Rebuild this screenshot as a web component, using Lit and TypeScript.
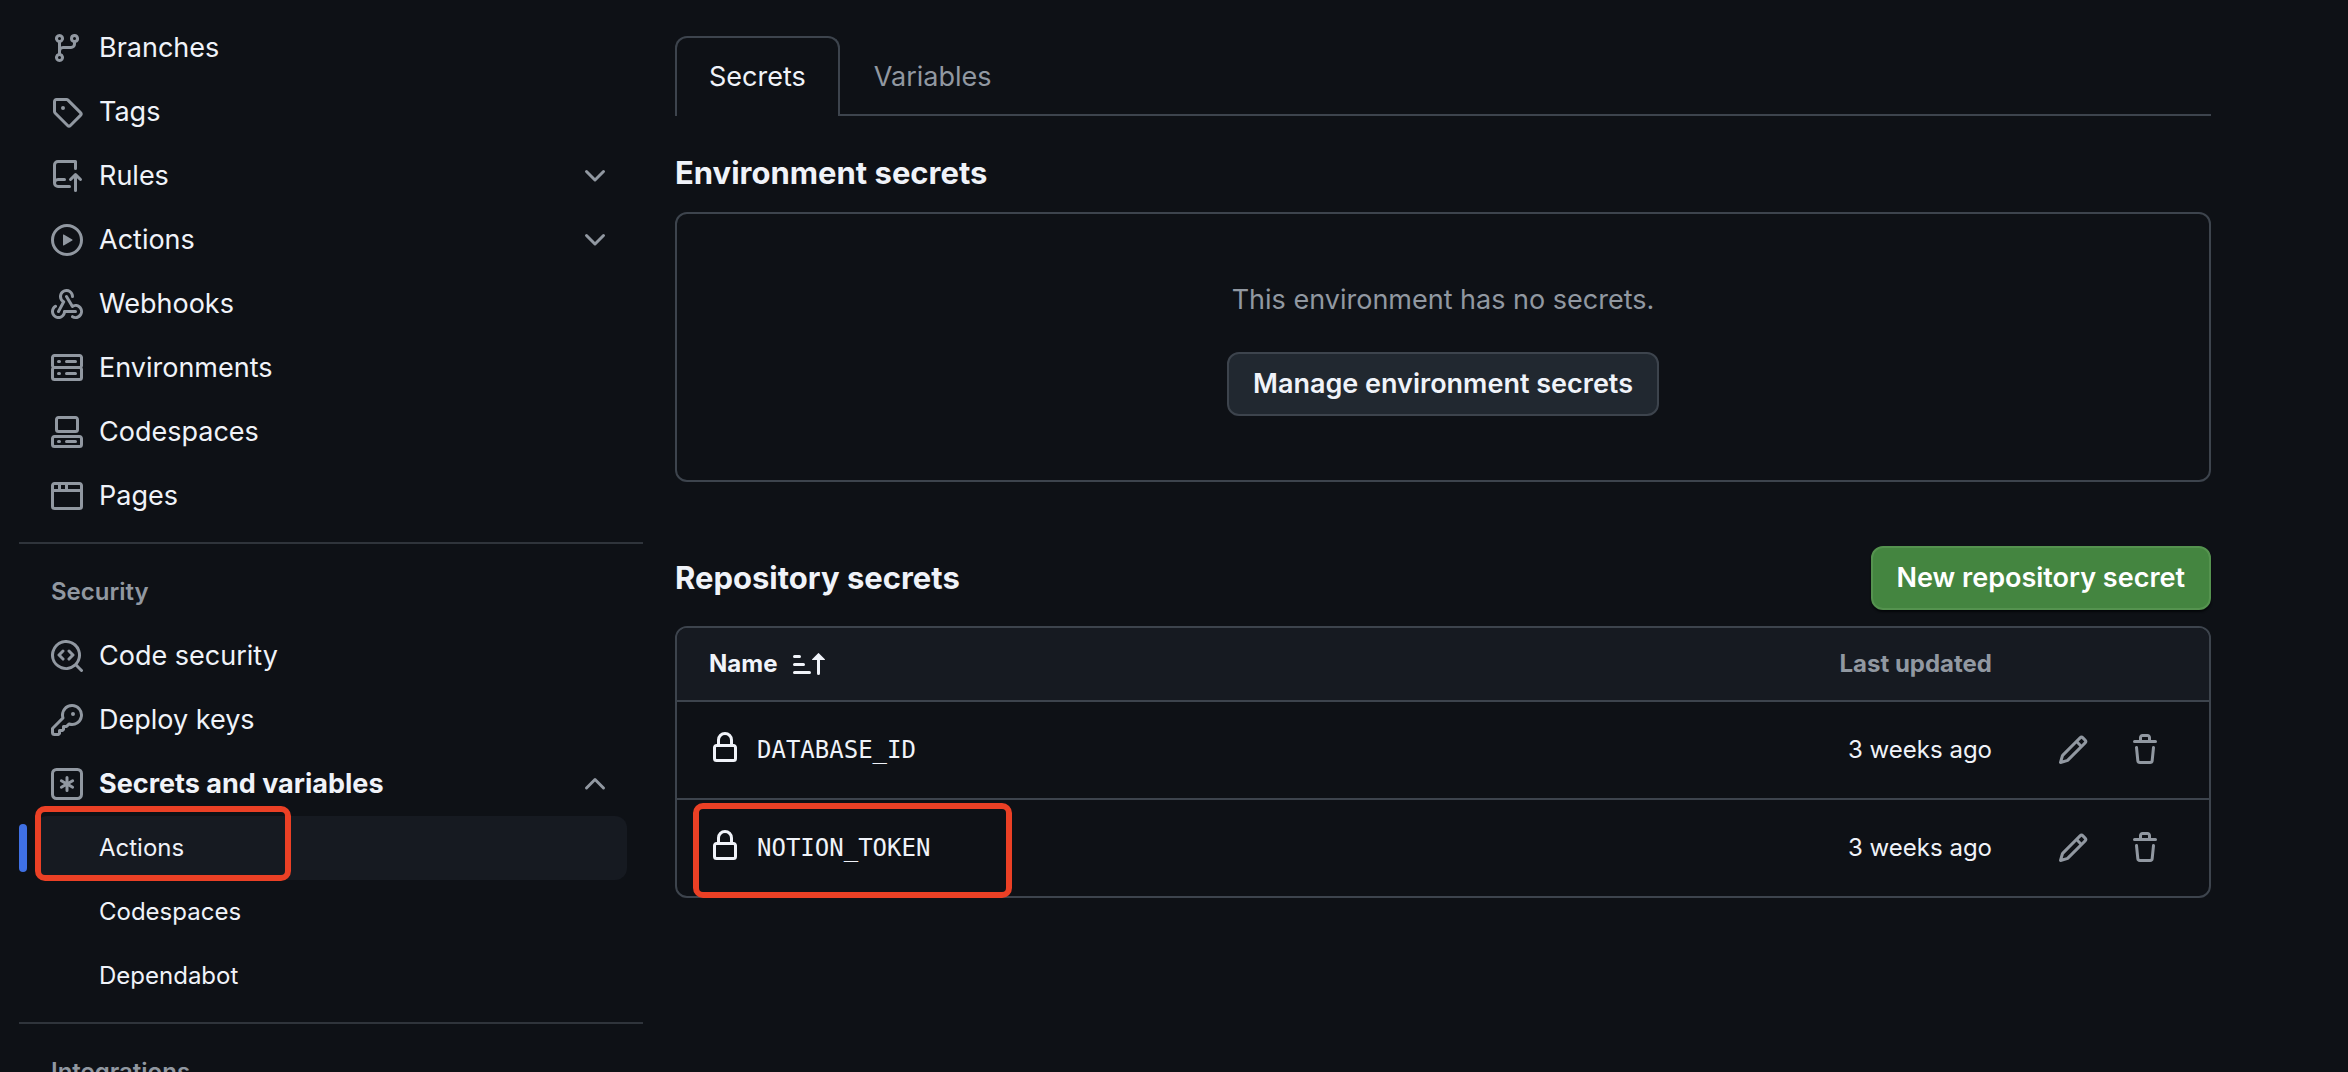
import { LitElement, html, css, svg, nothing } from "lit";
import { customElement, property } from "lit/decorators.js";
import { classMap } from "lit/directives/class-map.js";

const ICONS: Record<string, string> = {
  branch:
    "M9.5 3.25a2.25 2.25 0 1 1 3 2.122V6A2.5 2.5 0 0 1 10 8.5H6a1 1 0 0 0-1 1v1.128a2.251 2.251 0 1 1-1.5 0V5.372a2.25 2.25 0 1 1 1.5 0v1.836A2.493 2.493 0 0 1 6 7h4a1 1 0 0 0 1-1v-.628A2.25 2.25 0 0 1 9.5 3.25Zm-6 0a.75.75 0 1 0 1.5 0 .75.75 0 0 0-1.5 0Zm8.25-.75a.75.75 0 1 0 0 1.5.75.75 0 0 0 0-1.5ZM4.25 12a.75.75 0 1 0 0 1.5.75.75 0 0 0 0-1.5Z",
  tag:
    "M1 7.775V2.75C1 1.784 1.784 1 2.75 1h5.025c.464 0 .91.184 1.238.513l6.25 6.25a1.75 1.75 0 0 1 0 2.474l-5.026 5.026a1.75 1.75 0 0 1-2.474 0l-6.25-6.25A1.752 1.752 0 0 1 1 7.775Zm1.5 0c0 .066.026.13.073.177l6.25 6.25a.25.25 0 0 0 .354 0l5.025-5.025a.25.25 0 0 0 0-.354l-6.25-6.25a.25.25 0 0 0-.177-.073H2.75a.25.25 0 0 0-.25.25ZM6 5a1 1 0 1 1 0 2 1 1 0 0 1 0-2Z",
  repoPush:
    "M1 2.5A2.5 2.5 0 0 1 3.5 0h8.75a.75.75 0 0 1 .75.75v3.5a.75.75 0 0 1-1.5 0V1.5h-8a1 1 0 0 0-1 1v6.708A2.493 2.493 0 0 1 3.5 9h3.25a.75.75 0 0 1 0 1.5H3.5a1 1 0 0 0 0 2h5.75a.75.75 0 0 1 0 1.5H3.5A2.5 2.5 0 0 1 1 11.5Zm13.23 7.79h-.001l-1.224-1.224v6.184a.75.75 0 0 1-1.5 0V9.066L10.28 10.29a.75.75 0 0 1-1.06-1.061l2.505-2.504a.75.75 0 0 1 1.06 0L15.29 9.23a.751.751 0 0 1-.018 1.042.751.751 0 0 1-1.042.018Z",
  play:
    "M8 0a8 8 0 1 1 0 16A8 8 0 0 1 8 0ZM1.5 8a6.5 6.5 0 1 0 13 0 6.5 6.5 0 0 0-13 0Zm4.879-2.773 4.264 2.559a.25.25 0 0 1 0 .428l-4.264 2.559A.25.25 0 0 1 6 10.559V5.442a.25.25 0 0 1 .379-.215Z",
  webhook:
    "M5.5 4.25a2.25 2.25 0 0 1 4.5 0 .75.75 0 0 0 1.5 0 3.75 3.75 0 1 0-6.14 2.889l-2.272 4.258a.75.75 0 0 0 1.324.706L7 7.25a.75.75 0 0 0-.309-1.015A2.25 2.25 0 0 1 5.5 4.25ZM7.364 3.607a.75.75 0 0 1 1.03.257l2.608 4.349a3.75 3.75 0 1 1-.628 6.785.75.75 0 0 1 .752-1.299 2.25 2.25 0 1 0-.033-3.88.75.75 0 0 1-1.03-.256L7.107 4.636a.75.75 0 0 1 .257-1.03ZM2.9 8.776A.75.75 0 0 1 2.625 9.8 2.25 2.25 0 1 0 6 11.75a.75.75 0 0 1 .75-.751h5.5a.75.75 0 0 1 0 1.5H7.425a3.751 3.751 0 1 1-5.55-3.998.75.75 0 0 1 1.024.274Z",
  server:
    "M1.75 1h12.5c.966 0 1.75.784 1.75 1.75v4c0 .372-.116.717-.314 1 .198.283.314.628.314 1v4a1.75 1.75 0 0 1-1.75 1.75H1.75A1.75 1.75 0 0 1 0 12.75v-4c0-.358.109-.707.314-1a1.739 1.739 0 0 1-.314-1v-4C0 1.784.784 1 1.75 1ZM1.5 2.75v4c0 .138.112.25.25.25h12.5a.25.25 0 0 0 .25-.25v-4a.25.25 0 0 0-.25-.25H1.75a.25.25 0 0 0-.25.25Zm.25 5.75a.25.25 0 0 0-.25.25v4c0 .138.112.25.25.25h12.5a.25.25 0 0 0 .25-.25v-4a.25.25 0 0 0-.25-.25ZM7 4.75A.75.75 0 0 1 7.75 4h4.5a.75.75 0 0 1 0 1.5h-4.5A.75.75 0 0 1 7 4.75ZM7.75 10h4.5a.75.75 0 0 1 0 1.5h-4.5a.75.75 0 0 1 0-1.5ZM3 4.75A.75.75 0 0 1 3.75 4h.5a.75.75 0 0 1 0 1.5h-.5A.75.75 0 0 1 3 4.75ZM3.75 10h.5a.75.75 0 0 1 0 1.5h-.5a.75.75 0 0 1 0-1.5Z",
  codespaces:
    "M0 11.25c0-.966.784-1.75 1.75-1.75h12.5c.966 0 1.75.784 1.75 1.75v3A1.75 1.75 0 0 1 14.25 16H1.75A1.75 1.75 0 0 1 0 14.25Zm2-9.5C2 .784 2.784 0 3.75 0h8.5C13.216 0 14 .784 14 1.75v5a1.75 1.75 0 0 1-1.75 1.75h-8.5A1.75 1.75 0 0 1 2 6.75Zm1.75-.25a.25.25 0 0 0-.25.25v5c0 .138.112.25.25.25h8.5a.25.25 0 0 0 .25-.25v-5a.25.25 0 0 0-.25-.25Zm-2 9.5a.25.25 0 0 0-.25.25v3c0 .138.112.25.25.25h12.5a.25.25 0 0 0 .25-.25v-3a.25.25 0 0 0-.25-.25ZM7 12.75a.75.75 0 0 1 .75-.75h4.5a.75.75 0 0 1 0 1.5h-4.5a.75.75 0 0 1-.75-.75Zm-4 0a.75.75 0 0 1 .75-.75h.5a.75.75 0 0 1 0 1.5h-.5a.75.75 0 0 1-.75-.75Z",
  browser:
    "M0 2.75C0 1.784.784 1 1.75 1h12.5c.966 0 1.75.784 1.75 1.75v10.5A1.75 1.75 0 0 1 14.25 15H1.75A1.75 1.75 0 0 1 0 13.25ZM14.5 6h-13v7.25c0 .138.112.25.25.25h12.5a.25.25 0 0 0 .25-.25Zm-6-3.5v2h6V2.75a.25.25 0 0 0-.25-.25ZM5 2.5v2h2v-2Zm-3.25 0a.25.25 0 0 0-.25.25V4.5h2v-2Z",
  codescan:
    "M8.47 4.97a.75.75 0 0 0 0 1.06L9.94 7.5 8.47 8.97a.75.75 0 1 0 1.06 1.06l2-2a.75.75 0 0 0 0-1.06l-2-2a.75.75 0 0 0-1.06 0ZM6.53 6.03a.75.75 0 0 0-1.06-1.06l-2 2a.75.75 0 0 0 0 1.06l2 2a.75.75 0 1 0 1.06-1.06L5.06 7.5l1.47-1.47ZM12.246 13.307a7.501 7.501 0 1 1 1.06-1.06l2.474 2.473a.749.749 0 1 1-1.06 1.06ZM1.5 7.5a6.002 6.002 0 0 0 3.608 5.504 6.002 6.002 0 0 0 6.486-1.117.748.748 0 0 1 .292-.293A6 6 0 1 0 1.5 7.5Z",
  key:
    "M10.5 0a5.499 5.499 0 1 1-1.288 10.848l-.932.932a.749.749 0 0 1-.53.22H7v.75a.749.749 0 0 1-.22.53l-.5.5a.749.749 0 0 1-.53.22H5v.75a.749.749 0 0 1-.22.53l-.5.5a.749.749 0 0 1-.53.22h-2A1.75 1.75 0 0 1 0 14.25v-2c0-.199.079-.389.22-.53l4.932-4.932A5.5 5.5 0 0 1 10.5 0Zm-4 5.5c-.001.431.069.86.205 1.269a.75.75 0 0 1-.181.768L1.5 12.56v1.69c0 .138.112.25.25.25h1.69l.06-.06v-1.19a.75.75 0 0 1 .75-.75h1.19l.06-.06v-1.19a.75.75 0 0 1 .75-.75h1.19l1.023-1.025a.75.75 0 0 1 .768-.18A4 4 0 1 0 6.5 5.5ZM11 6a1 1 0 1 1 0-2 1 1 0 0 1 0 2Z",
  asterisk:
    "M0 2.75A2.75 2.75 0 0 1 2.75 0h10.5A2.75 2.75 0 0 1 16 2.75v10.5A2.75 2.75 0 0 1 13.25 16H2.75A2.75 2.75 0 0 1 0 13.25ZM2.75 1.5c-.69 0-1.25.56-1.25 1.25v10.5c0 .69.56 1.25 1.25 1.25h10.5c.69 0 1.25-.56 1.25-1.25V2.75c0-.69-.56-1.25-1.25-1.25ZM8 4a.75.75 0 0 1 .75.75V6.7l1.69-.975a.75.75 0 0 1 .75 1.3L9.5 8l1.69.976a.75.75 0 0 1-.75 1.298L8.75 9.3v1.951a.75.75 0 0 1-1.5 0V9.299l-1.69.976a.75.75 0 0 1-.75-1.3L6.5 8l-1.69-.975a.75.75 0 0 1 .75-1.3l1.69.976V4.75A.75.75 0 0 1 8 4Z",
  chevronDown:
    "M12.78 5.22a.749.749 0 0 1 0 1.06l-4.25 4.25a.749.749 0 0 1-1.06 0L3.22 6.28a.749.749 0 1 1 1.06-1.06L8 8.939l3.72-3.719a.749.749 0 0 1 1.06 0Z",
  chevronUp:
    "M3.22 10.53a.749.749 0 0 1 0-1.06l4.25-4.25a.749.749 0 0 1 1.06 0l4.25 4.25a.749.749 0 1 1-1.06 1.06L8 6.811 4.28 10.53a.749.749 0 0 1-1.06 0Z",
  sortAsc:
    "m12.927 2.573 3 3A.25.25 0 0 1 15.75 6H13.5v6.75a.75.75 0 0 1-1.5 0V6H9.75a.25.25 0 0 1-.177-.427l3-3a.25.25 0 0 1 .354 0ZM0 12.25a.75.75 0 0 1 .75-.75h7.5a.75.75 0 0 1 0 1.5H.75a.75.75 0 0 1-.75-.75Zm0-4a.75.75 0 0 1 .75-.75h4.5a.75.75 0 0 1 0 1.5H.75A.75.75 0 0 1 0 8.25Zm0-4a.75.75 0 0 1 .75-.75h2.5a.75.75 0 0 1 0 1.5H.75A.75.75 0 0 1 0 4.25Z",
  lock:
    "M4 4a4 4 0 0 1 8 0v2h.25c.966 0 1.75.784 1.75 1.75v5.5A1.75 1.75 0 0 1 12.25 15h-8.5A1.75 1.75 0 0 1 2 13.25v-5.5C2 6.784 2.784 6 3.75 6H4Zm8.25 3.5h-8.5a.25.25 0 0 0-.25.25v5.5c0 .138.112.25.25.25h8.5a.25.25 0 0 0 .25-.25v-5.5a.25.25 0 0 0-.25-.25ZM10.5 6V4a2.5 2.5 0 1 0-5 0v2Z",
  pencil:
    "M11.013 1.427a1.75 1.75 0 0 1 2.474 0l1.086 1.086a1.75 1.75 0 0 1 0 2.474l-8.61 8.61c-.21.21-.47.364-.756.445l-3.251.93a.75.75 0 0 1-.927-.928l.929-3.25c.081-.286.235-.547.445-.758l8.61-8.61Zm.176 4.823L9.75 4.81l-6.286 6.287a.253.253 0 0 0-.064.108l-.558 1.953 1.953-.558a.253.253 0 0 0 .108-.064Zm1.238-3.763a.25.25 0 0 0-.354 0L10.811 3.75l1.439 1.44 1.263-1.263a.25.25 0 0 0 0-.354Z",
  trash:
    "M11 1.75V3h2.25a.75.75 0 0 1 0 1.5H2.75a.75.75 0 0 1 0-1.5H5V1.75C5 .784 5.784 0 6.75 0h2.5C10.216 0 11 .784 11 1.75ZM4.496 6.675l.66 6.6a.25.25 0 0 0 .249.225h5.19a.25.25 0 0 0 .249-.225l.66-6.6a.75.75 0 0 1 1.492.149l-.66 6.6A1.748 1.748 0 0 1 10.595 15h-5.19a1.75 1.75 0 0 1-1.741-1.575l-.66-6.6a.75.75 0 1 1 1.492-.15ZM6.5 1.75V3h3V1.75a.25.25 0 0 0-.25-.25h-2.5a.25.25 0 0 0-.25.25Z",
};

@customElement("ui-icon")
export class UiIcon extends LitElement {
  @property() name = "";

  static styles = css`
    :host {
      display: block;
      flex: none;
      width: 32px;
      height: 32px;
    }
    .glyph {
      display: block;
      width: 100%;
      height: 100%;
      fill: currentColor;
    }
  `;

  render() {
    return html`<svg class="glyph" viewBox="0 0 16 16" aria-hidden="true">
      ${svg`<path d=${ICONS[this.name] ?? ""}></path>`}
    </svg>`;
  }
}

interface NavItem {
  label: string;
  icon: string;
  open?: boolean;
  children?: { label: string; current?: boolean }[];
}

const CODE_NAV: NavItem[] = [
  { label: "Branches", icon: "branch" },
  { label: "Tags", icon: "tag" },
  { label: "Rules", icon: "repoPush", open: false },
  { label: "Actions", icon: "play", open: false },
  { label: "Webhooks", icon: "webhook" },
  { label: "Environments", icon: "server" },
  { label: "Codespaces", icon: "codespaces" },
  { label: "Pages", icon: "browser" },
];

const SECURITY_NAV: NavItem[] = [
  { label: "Code security", icon: "codescan" },
  { label: "Deploy keys", icon: "key" },
  {
    label: "Secrets and variables",
    icon: "asterisk",
    open: true,
    children: [
      { label: "Actions", current: true },
      { label: "Codespaces" },
      { label: "Dependabot" },
    ],
  },
];

@customElement("settings-nav")
export class SettingsNav extends LitElement {
  static styles = css`
    :host {
      display: block;
      padding-top: 16px;
    }
    .list {
      list-style: none;
      margin: 0;
      padding: 0;
    }
    .row {
      display: flex;
      align-items: center;
      gap: 16px;
      box-sizing: border-box;
      width: calc(100% - 32px);
      height: 64px;
      margin: 0 16px;
      padding: 0 16px;
      border: 0;
      border-radius: 12px;
      background: none;
      color: #f0f3f9;
      font: inherit;
      text-align: left;
      text-decoration: none;
      cursor: pointer;
    }
    .open {
      font-weight: 700;
    }
    .label {
      flex: 1;
    }
    .icon {
      color: #9198a1;
    }
    .item {
      position: relative;
    }
    .sub {
      padding-left: 64px;
      font-size: 24px;
    }
    .current {
      background: #161a21;
    }
    .marker {
      position: absolute;
      left: 0;
      top: 8px;
      bottom: 8px;
      width: 8px;
      border-radius: 4px;
      background: #3f70e4;
    }
    .highlight {
      position: absolute;
      left: 16px;
      top: -10px;
      bottom: -1px;
      width: 256px;
      box-sizing: border-box;
      border: 6px solid #eb4025;
      border-radius: 10px;
      pointer-events: none;
    }
    .rule {
      height: 2px;
      margin: 14px 0 0;
      border: 0;
      background: #2f343b;
    }
    .title {
      margin: 0;
      padding: 32px 32px 16px;
      color: #9198a1;
      font-size: 24px;
      font-weight: 600;
      line-height: 32px;
    }
  `;

  private renderItem(item: NavItem) {
    const body = html`<ui-icon class="icon" name=${item.icon}></ui-icon>
      <span class="label">${item.label}</span>`;
    if (item.open === undefined) {
      return html`<li class="item"><a class="row" href="#">${body}</a></li>`;
    }
    return html`<li class="item">
      <button
        class=${classMap({ row: true, open: item.open })}
        type="button"
        aria-expanded=${item.open ? "true" : "false"}
      >
        ${body}
        <ui-icon class="icon" name=${item.open ? "chevronUp" : "chevronDown"}></ui-icon>
      </button>
      ${item.children
        ? html`<ul class="list">
            ${item.children.map(
              (child) => html`<li class="item">
                <a
                  class=${classMap({ row: true, sub: true, current: !!child.current })}
                  href="#"
                  aria-current=${child.current ? "page" : nothing}
                  >${child.label}</a
                >
                ${child.current
                  ? html`<span class="marker"></span><span class="highlight"></span>`
                  : nothing}
              </li>`
            )}
          </ul>`
        : nothing}
    </li>`;
  }

  render() {
    return html`<nav>
      <ul class="list">
        ${CODE_NAV.map((item) => this.renderItem(item))}
      </ul>
      <hr class="rule" />
      <h3 class="title">Security</h3>
      <ul class="list">
        ${SECURITY_NAV.map((item) => this.renderItem(item))}
      </ul>
      <hr class="rule" />
      <h3 class="title">Integrations</h3>
    </nav>`;
  }
}

interface Secret {
  name: string;
  updated: string;
  highlighted?: boolean;
}

const SECRETS: Secret[] = [
  { name: "DATABASE_ID", updated: "3 weeks ago" },
  { name: "NOTION_TOKEN", updated: "3 weeks ago", highlighted: true },
];

@customElement("secrets-table")
export class SecretsTable extends LitElement {
  static styles = css`
    :host {
      display: block;
    }
    .table {
      width: 100%;
      border: 2px solid #3d444d;
      border-radius: 12px;
      border-collapse: separate;
      border-spacing: 0;
      font-size: 24px;
    }
    .head {
      height: 72px;
      padding: 0;
      border-bottom: 2px solid #3d444d;
      background: #161a21;
      font-weight: 700;
    }
    .head:first-child {
      border-top-left-radius: 10px;
    }
    .head:last-child {
      border-top-right-radius: 10px;
    }
    .cell {
      position: relative;
      height: 96px;
      padding: 0;
      border-bottom: 2px solid #3d444d;
    }
    .row:last-child .cell {
      border-bottom: 0;
    }
    .name {
      padding-left: 32px;
      text-align: left;
    }
    .date {
      text-align: right;
      white-space: nowrap;
    }
    .muted {
      color: #9198a1;
    }
    .tools {
      width: 217px;
    }
    .sort {
      display: flex;
      align-items: center;
      gap: 16px;
      padding: 0;
      border: 0;
      background: none;
      color: inherit;
      font: inherit;
      cursor: pointer;
    }
    .secret {
      display: flex;
      align-items: center;
      gap: 16px;
    }
    .lock {
      margin-bottom: 4px;
    }
    .code {
      font-family: "DejaVu Sans Mono", "Liberation Mono", monospace;
    }
    .actions {
      display: flex;
      justify-content: flex-end;
      gap: 8px;
      padding-right: 32px;
    }
    .action {
      display: grid;
      place-items: center;
      width: 64px;
      height: 64px;
      padding: 0;
      border: 0;
      border-radius: 12px;
      background: none;
      color: #9198a1;
      cursor: pointer;
    }
    .highlight {
      position: absolute;
      left: 16px;
      top: 3px;
      bottom: -2px;
      width: 319px;
      box-sizing: border-box;
      border: 6px solid #eb4025;
      border-radius: 10px;
      pointer-events: none;
    }
  `;

  render() {
    return html`<table class="table">
      <thead>
        <tr>
          <th class="head name" scope="col" aria-sort="ascending">
            <button class="sort" type="button">
              Name <ui-icon name="sortAsc"></ui-icon>
            </button>
          </th>
          <th class="head date muted" scope="col">Last updated</th>
          <th class="head tools"></th>
        </tr>
      </thead>
      <tbody>
        ${SECRETS.map(
          (secret) => html`<tr class="row">
            <td class="cell name">
              <div class="secret">
                <ui-icon class="lock" name="lock"></ui-icon>
                <code class="code">${secret.name}</code>
              </div>
              ${secret.highlighted ? html`<span class="highlight"></span>` : nothing}
            </td>
            <td class="cell date">${secret.updated}</td>
            <td class="cell tools">
              <div class="actions">
                <button class="action" type="button" aria-label="Edit ${secret.name}">
                  <ui-icon name="pencil"></ui-icon>
                </button>
                <button class="action" type="button" aria-label="Delete ${secret.name}">
                  <ui-icon name="trash"></ui-icon>
                </button>
              </div>
            </td>
          </tr>`
        )}
      </tbody>
    </table>`;
  }
}

@customElement("app-root")
export class AppRoot extends LitElement {
  static styles = css`
    :host {
      display: block;
      height: 100vh;
      overflow: hidden;
      background: #0e1116;
      color: #f0f3f9;
      font-family: Inter, "Liberation Sans", sans-serif;
      font-size: 27px;
      line-height: 40px;
    }
    .page {
      display: flex;
      gap: 32px;
      padding: 0 137px 0 19px;
    }
    .side {
      flex: none;
      width: 624px;
    }
    .main {
      flex: 1;
      min-width: 0;
      padding-top: 36px;
    }
    .tabs {
      display: flex;
      height: 80px;
      box-shadow: inset 0 -2px #3d444d;
    }
    .tab {
      box-sizing: border-box;
      padding: 19px 32px 0;
      border: 2px solid transparent;
      border-bottom: 0;
      color: #9198a1;
      text-decoration: none;
    }
    .selected {
      border-color: #3d444d;
      border-radius: 12px 12px 0 0;
      background: #0e1116;
      color: #f0f3f9;
    }
    .heading {
      margin: 0;
      font-size: 31px;
      font-weight: 700;
      line-height: 48px;
    }
    .env {
      padding: 33px 0 15px;
    }
    .blank {
      display: flex;
      flex-direction: column;
      align-items: center;
      gap: 32px;
      padding: 66px 32px 64px;
      border: 2px solid #3d444d;
      border-radius: 12px;
    }
    .note {
      margin: 0;
      color: #9198a1;
    }
    .button {
      box-sizing: border-box;
      height: 64px;
      padding: 0 24px;
      border: 2px solid #3d444d;
      border-radius: 12px;
      background: #212830;
      color: #f0f3f9;
      font: inherit;
      font-weight: 600;
      cursor: pointer;
    }
    .primary {
      border-color: #55934f;
      background: #448540;
      color: #ffffff;
      box-shadow: 0 2px 2px #05070a;
    }
    .bar {
      display: flex;
      align-items: center;
      justify-content: space-between;
      padding: 64px 0 16px;
    }
  `;

  render() {
    return html`<div class="page">
      <settings-nav class="side"></settings-nav>
      <main class="main">
        <nav class="tabs">
          <a class="tab selected" href="#" aria-current="page">Secrets</a>
          <a class="tab" href="#">Variables</a>
        </nav>
        <h2 class="heading env">Environment secrets</h2>
        <section class="blank">
          <p class="note">This environment has no secrets.</p>
          <button class="button" type="button">Manage environment secrets</button>
        </section>
        <div class="bar">
          <h2 class="heading">Repository secrets</h2>
          <button class="button primary" type="button">New repository secret</button>
        </div>
        <secrets-table></secrets-table>
      </main>
    </div>`;
  }
}
